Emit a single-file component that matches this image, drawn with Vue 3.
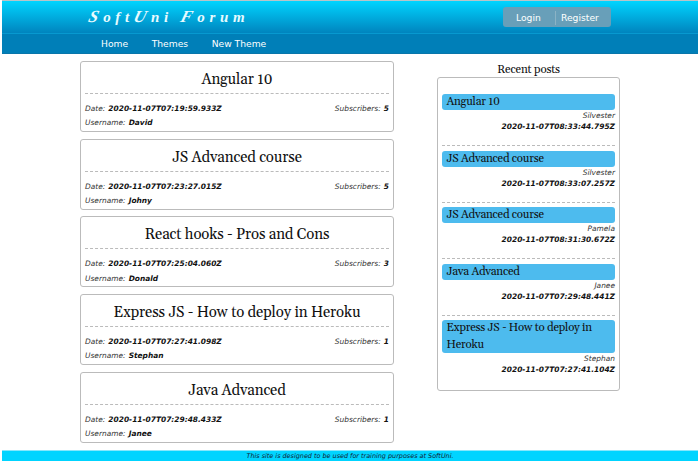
<script setup>
const themes = [
  { title: 'Angular 10', date: '2020-11-07T07:19:59.933Z', user: 'David', subs: 5 },
  { title: 'JS Advanced course', date: '2020-11-07T07:23:27.015Z', user: 'Johny', subs: 5 },
  { title: 'React hooks - Pros and Cons', date: '2020-11-07T07:25:04.060Z', user: 'Donald', subs: 3 },
  { title: 'Express JS - How to deploy in Heroku', date: '2020-11-07T07:27:41.098Z', user: 'Stephan', subs: 1 },
  { title: 'Java Advanced', date: '2020-11-07T07:29:48.433Z', user: 'Janee', subs: 1 },
]
const posts = [
  { title: 'Angular 10', user: 'Silvester', date: '2020-11-07T08:33:44.795Z' },
  { title: 'JS Advanced course', user: 'Silvester', date: '2020-11-07T08:33:07.257Z' },
  { title: 'JS Advanced course', user: 'Pamela', date: '2020-11-07T08:31:30.672Z' },
  { title: 'Java Advanced', user: 'Janee', date: '2020-11-07T07:29:48.441Z' },
  { title: 'Express JS - How to deploy in Heroku', user: 'Stephan', date: '2020-11-07T07:27:41.104Z' },
]
</script>

<template>
  <div class="page">
    <header>
      <div class="top">
        <h1 class="logo"><span class="cap">S</span>oft<span class="cap">U</span>ni <span class="cap">F</span>orum</h1>
        <div class="auth"><a class="login">Login</a><a class="register">Register</a></div>
      </div>
      <nav><a>Home</a><a>Themes</a><a>New Theme</a></nav>
    </header>
    <main>
      <section class="themes">
        <article v-for="t in themes" :key="t.title" class="theme">
          <h2>{{ t.title }}</h2>
          <div class="info">
            <div>
              <p>Date: <b>{{ t.date }}</b></p>
              <p>Username: <b>{{ t.user }}</b></p>
            </div>
            <p>Subscribers: <b>{{ t.subs }}</b></p>
          </div>
        </article>
      </section>
      <aside>
        <h3>Recent posts</h3>
        <div class="posts">
          <article v-for="p in posts" :key="p.date" class="post">
            <h4>{{ p.title }}</h4>
            <p>{{ p.user }}</p>
            <p><b>{{ p.date }}</b></p>
          </article>
        </div>
      </aside>
    </main>
    <footer>This site is designed to be used for training purposes at SoftUni.</footer>
  </div>
</template>

<style>
body { background: #fff; overflow: hidden; }
</style>

<style scoped>
* { box-sizing: border-box; margin: 0; padding: 0; }
.page { width: 696px; height: 463px; margin-left: 2px; display: flex; flex-direction: column; font: 7.45px "DejaVu Sans", sans-serif; color: #333; }
header { height: 54px; border-top: 1px solid #b9c4c8; flex: none; }
.top { height: 32px; padding: 7px 87px 0 87px; display: flex; justify-content: space-between; align-items: flex-start; background: linear-gradient(#00d4ff, #0084be); }
.logo { font: italic bold 15px/17px "Brush Script MT", "Liberation Serif", serif; letter-spacing: 4.7px; color: #e8fbff; white-space: nowrap; }
.cap { display: inline-block; font-size: 17px; transform: skewX(-16deg); }
.auth { width: 108px; height: 20px; margin-top: -1px; padding: 4px 0 2px; display: flex; border-radius: 3px; background: #689fb9; color: #fff; font-size: 9.2px; line-height: 13px; }
.login { width: 53px; padding-left: 13px; border-right: 1px solid #8bb3c5; }
.register { padding-left: 5px; }
nav { height: 21px; border-top: 1px solid #0799d0; border-bottom: 1px solid #0876aa; padding-left: 99px; display: flex; gap: 23.5px; background: #007fb8; color: #fff; font-size: 9.2px; line-height: 20px; }
main { height: 396px; display: flex; padding-left: 78px; flex: none; }
.themes { width: 314px; padding-top: 7px; display: flex; flex-direction: column; gap: 6.7px; }
.theme { height: 71px; flex: none; border: 1px solid #bbb; border-radius: 3px; padding: 0 4px; }
h2, h3, h4 { font-family: Georgia, Gelasio, "Liberation Serif", serif; font-weight: 400; font-variant-numeric: oldstyle-nums; color: #111; }
h2 { height: 32px; border-bottom: 1px dashed #bbb; font-size: 15px; line-height: 36px; letter-spacing: -0.14px; text-align: center; white-space: nowrap; }
.info { padding-top: 8px; display: flex; justify-content: space-between; }
p { font-style: italic; line-height: 14.4px; white-space: nowrap; }
.info p { word-spacing: 0.7px; }
b { color: #111; }
aside { width: 183px; margin-left: 43px; padding-top: 7px; }
h3 { font-size: 11.5px; line-height: 18px; height: 16px; letter-spacing: -0.16px; text-align: center; }
.posts { height: 314px; border: 1px solid #bbb; border-radius: 3px; padding: 16px 4px 0; }
.post { height: 52px; margin-bottom: 4.6px; border-bottom: 1px dashed #bbb; text-align: right; }
.post:last-child { border: 0; }
h4 { border-radius: 3px; padding: 0 5px 0 4.5px; background: #4dbbee; font-size: 11.5px; line-height: 16.2px; letter-spacing: -0.22px; text-align: left; }
.post p { line-height: 11px; }
footer { height: 11px; background: #00d4ff; border-top: 1px solid #86e7fc; text-align: center; font-size: 6.45px; line-height: 10px; font-style: italic; color: #123; }
</style>
